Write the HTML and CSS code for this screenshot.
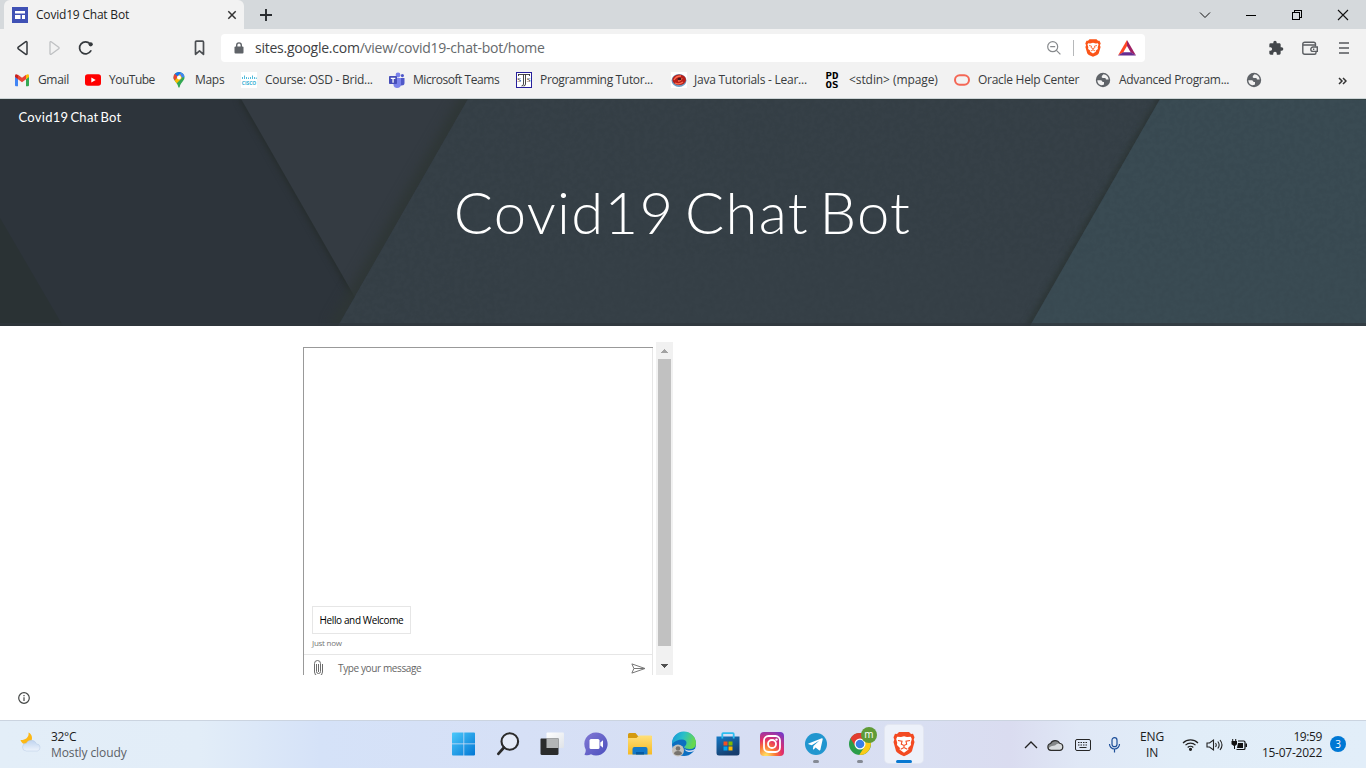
FILE: index.html
```html
<!DOCTYPE html>
<html lang="en">
<head>
<meta charset="utf-8">
<title>Covid19 Chat Bot</title>
<link rel="stylesheet" href="styles.css">
</head>
<body>
<div class="screen">
  <header class="tabstrip">
    <div class="tab">
      <svg class="fav" width="16" height="16" viewBox="0 0 16 16"><path fill="#3f51b5" d="M0 0h16v16H0z"/><path fill="#fff" d="M3 4h10v2.600H3zM3 8h5.500v4H3zM10 8h3v4h-3z"/></svg>
      <span class="tab-title">Covid19 Chat Bot</span>
      <svg width="10" height="10" viewBox="0 0 10 10" stroke="#333" stroke-width="1.500"><path d="M1.300 1.300l7.400 7.400M8.700 1.300L1.300 8.700"/></svg>
    </div>
    <svg class="newtab" width="14" height="14" viewBox="0 0 14 14" stroke="#292c30" stroke-width="1.900"><path d="M7 1v12M1 7h12"/></svg>
    <div class="window-controls">
      <svg width="12" height="12" viewBox="0 0 12 12" fill="none" stroke="#111"><path d="M1 3.500l5 5 5-5"/></svg>
      <svg width="12" height="12" viewBox="0 0 12 12" stroke="#000" shape-rendering="crispEdges"><path d="M1 6.500h10"/></svg>
      <svg width="12" height="12" viewBox="0 0 12 12" fill="none" stroke="#000" shape-rendering="crispEdges"><path d="M1.500 3.500h7v7h-7zM3.500 3V1.500h7v7H9"/></svg>
      <svg width="12" height="12" viewBox="0 0 12 12" stroke="#111" stroke-width="1.100"><path d="M1 1l10 10M11 1L1 11"/></svg>
    </div>
  </header>

  <nav class="toolbar">
    <svg class="back" width="14" height="16" viewBox="0 0 14 16" fill="none" stroke="#363a3e" stroke-width="1.500" stroke-linejoin="round"><path d="M11 2.200v11.600a.8.8 0 0 1-1.200.5L2.300 8.800a1 1 0 0 1 0-1.600L9.800 1.700a.8.8 0 0 1 1.200.5z"/></svg>
    <svg class="forward" width="14" height="16" viewBox="0 0 14 16" fill="none" stroke="#bfc1c3" stroke-width="1.300" stroke-linejoin="round"><path d="M2 2.200v11.600a.8.8 0 0 0 1.200.5l7.500-5.500a1 1 0 0 0 0-1.600L3.200 1.700A.8.8 0 0 0 2 2.200z"/></svg>
    <svg class="reload" width="16" height="16" viewBox="0 0 16 16" fill="none" stroke="#363a3e" stroke-width="1.700"><path d="M12.800 10.800A6 6 0 1 1 12 3.800" stroke-linecap="round"/><circle cx="12.700" cy="4.300" r="2.100" fill="#363a3e" stroke="none"/></svg>
    <svg class="bookmark" width="12" height="16" viewBox="0 0 12 16" fill="none" stroke="#4b4e52" stroke-width="1.700" stroke-linejoin="round"><path d="M1.500 2.200q0-1 1-1h6q1 0 1 1v12.100l-4-3.400-4 3.400z"/></svg>
    <div class="address">
      <svg class="lock" width="10" height="12" viewBox="0 0 10 12"><rect x=".5" y="4.500" width="9" height="7" rx="1" fill="#5f6368"/><path d="M2.700 5V3.200a2.300 2.300 0 0 1 4.600 0V5" fill="none" stroke="#5f6368" stroke-width="1.400"/></svg>
      <span class="url"><span class="host">sites.google.com</span>/view/covid19-chat-bot/home</span>
      <svg class="zoomout" width="14" height="14" viewBox="0 0 14 14" fill="none" stroke="#86898c" stroke-width="1.200"><circle cx="5.700" cy="5.700" r="5"/><path d="M3.200 5.700h5M9.400 9.400l4 4"/></svg>
      <span class="separator"></span>
      <svg class="shields" width="16" height="18" viewBox="0 0 16 18"><path fill="#fb5418" d="M4.500.3h7l1.500 1.500 1.500-.1 1.200 2.800-.8 1.700.7 1.800-1.800 6.200q-.4 1.500-5.800 3.600-5.400-2.100-5.800-3.600L.4 8l.7-1.800-.8-1.700 1.200-2.800 1.500.1z"/><path fill="#fff" d="M3.200 4.200l1.900.2L8 3.700l2.900.7 1.900-.2.700 1.300-.8 2.800.2 1.600-2 1.600.2 1L8 14.400l-3.100-1.900.2-1-2-1.600.2-1.600-.8-2.800z"/><path fill="none" stroke="#fb5418" stroke-width=".8" d="M4 6.500l2.500.6-.4 1.600 1.900.9 1.900-.9-.4-1.600L12 6.500M8 9.600v1.300M5.700 12L8 10.900l2.300 1.100"/></svg>
      <svg class="bat" width="18" height="16" viewBox="0 0 18 16"><path fill="#ff4724" d="M9 0L0 15.500l5.200-3L9 6z"/><path fill="#9e1f63" d="M9 0l9 15.500-5.200-3L9 6z"/><path fill="#662d91" d="M0 15.500h18l-5.200-3.200H5.200z"/></svg>
    </div>
    <svg class="extensions" width="16" height="16" viewBox="0 0 24 24" fill="#43474b"><path d="M20.500 11H19V7c0-1.100-.9-2-2-2h-4V3.500a2.500 2.500 0 0 0-5 0V5H4a2 2 0 0 0-2 2v3.800h1.500a2.700 2.700 0 0 1 0 5.400H2V20c0 1.100.9 2 2 2h3.800v-1.500a2.700 2.700 0 0 1 5.400 0V22H17a2 2 0 0 0 2-2v-4h1.500a2.500 2.500 0 0 0 0-5z"/></svg>
    <svg class="wallet" width="16" height="14" viewBox="0 0 16 14" fill="none" stroke="#5b5e62" stroke-width="1.400"><path d="M13.500 5.500V3q0-1.800-1.800-1.800H2.800Q.8 1.200.8 3v8.200q0 2 2 2h9.700q1.500 0 1.500-1.500v-1.200M1 4h12.500"/><path d="M15.300 6H11a2.200 2.200 0 0 0 0 4.400h4.300z"/><path d="M11 8.200h1.300"/></svg>
    <svg class="menu" width="10" height="14" viewBox="0 0 10 14" stroke="#55585c" stroke-width="1.600"><path d="M0 2h10M0 7h10M0 12h10"/></svg>
  </nav>

  <nav class="bookmarks">
    <div class="bm b1"><svg width="16" height="16" viewBox="0 0 16 16"><path fill="#4285f4" d="M1 4.500v8.700q0 1 1 1h2V7z"/><path fill="#34a853" d="M12 7v7.200h2q1 0 1-1V4.500z"/><path fill="#ea4335" d="M4 7.300V2.800l4 3 4-3v4.500l-4 3z"/><path fill="#c5221f" d="M4 3v4.300L1 5V3.600Q1.400 1 4 3z"/><path fill="#fbbc04" d="M12 3v4.300L15 5V3.600Q14.600 1 12 3z"/></svg><span>Gmail</span></div>
    <div class="bm b2"><svg width="16" height="16" viewBox="0 0 16 16"><rect y="2.200" width="16" height="11.600" rx="2.800" fill="#f00"/><path fill="#fff" d="M6.300 5.500v5L10.700 8z"/></svg><span>YouTube</span></div>
    <div class="bm b3"><svg width="16" height="16" viewBox="0 0 16 16"><clipPath id="pin"><path d="M8 0a5.500 5.500 0 0 0-5.500 5.500c0 3.500 4.200 5 4.800 9.600q.7 1.300 1.400 0c.6-4.600 4.800-6.100 4.800-9.600A5.500 5.500 0 0 0 8 0z"/></clipPath><g clip-path="url(#pin)"><path fill="#34a853" d="M0 0h16v16H0z"/><path fill="#4285f4" d="M7 0h7v5L9 6z"/><path fill="#1a73e8" d="M3 0h7L7 5 3 2z"/><path fill="#ea4335" d="M0 1l4 1 3 3-5 5z"/><path fill="#fbbc04" d="M3 9.500L9 2l2 4-6 6z"/></g><circle cx="8" cy="5.500" r="2" fill="#fff"/></svg><span>Maps</span></div>
    <div class="bm b4"><svg width="16" height="16" viewBox="0 0 16 16"><path fill="#fff" d="M0 0h16v16H0z"/><path stroke="#52bbdb" d="M1.500 5v2M3.500 3.500v3.500M5.500 5v2M7.500 5.500V7M9.500 5v2M11.500 3.500v3.500M13.500 5v2M15.300 5.500V7"/><text x=".8" y="12.500" textLength="14.400" lengthAdjust="spacingAndGlyphs" class="cisco">CISCO</text></svg><span>Course: OSD - Brid...</span></div>
    <div class="bm b5"><svg width="16" height="16" viewBox="0 0 16 16"><circle cx="9" cy="3" r="2.400" fill="#7b83eb"/><circle cx="13.400" cy="3.600" r="1.600" fill="#5059c9"/><path fill="#5059c9" d="M11 6h4.500v5q0 2.500-3 2.500H11z"/><path fill="#7b83eb" d="M5 6h7v6q0 4-4 4-3 0-3.500-3z"/><rect y="4" width="8" height="8" rx=".8" fill="#464eb8"/><path fill="#fff" d="M1.800 5.700h4.500V7H4.700v3.800H3.400V7H1.800z"/></svg><span>Microsoft Teams</span></div>
    <div class="bm b6"><svg width="16" height="16" viewBox="0 0 16 16"><rect x=".5" y=".5" width="15" height="15" fill="#fff" stroke="#27209c"/><path fill="none" stroke="#333" stroke-width=".9" d="M2 2.500h12M2.500 2v2M13.500 2v2M7.500 2.500v9.500q0 2-2 2M9.500 2.500V12q0 2-2 2"/><text x="1.300" y="10" class="tutor">S</text><text x="10.700" y="10" class="tutor">S</text></svg><span>Programming Tutor...</span></div>
    <div class="bm b7"><svg width="16" height="16" viewBox="0 0 16 16"><path fill="#fff" d="M0 0h16v16H0z"/><ellipse cx="8" cy="8.500" rx="7.500" ry="6.500" fill="#6d9ac0"/><ellipse cx="8.200" cy="7.700" rx="6.800" ry="5.200" fill="#b71f1a"/><path fill="none" stroke="#ff6e50" stroke-width="1.300" d="M3 8q2-4 7-4M7 9q3 0 4-3M4 11q4 2 8-1"/><ellipse cx="8.500" cy="7" rx="2" ry="1.300" fill="#481920"/></svg><span>Java Tutorials - Lear...</span></div>
    <div class="bm b8"><svg width="16" height="24" viewBox="0 0 16 24"><text x=".5" y="11" textLength="13" lengthAdjust="spacingAndGlyphs" class="pdos">PD</text><text x=".5" y="19.500" textLength="13" lengthAdjust="spacingAndGlyphs" class="pdos">OS</text></svg><span>&lt;stdin&gt; (mpage)</span></div>
    <div class="bm b9"><svg width="16" height="16" viewBox="0 0 16 16"><rect x="1" y="3.300" width="14" height="9.400" rx="4.700" fill="none" stroke="#f46755" stroke-width="2"/></svg><span>Oracle Help Center</span></div>
    <div class="bm b10"><svg width="16" height="16" viewBox="0 0 16 16"><circle cx="8" cy="8" r="7.200" fill="#5f6368"/><path fill="#f2f2f2" d="M2.300 8.200h3.400q1.700.1 1.800 1.900H9v2.300q-3 1.800-5.300-.3Q2.300 10.500 2.300 8.200zM8.500 2.300q4.300.5 5.200 5.200h-2.500q-.7 0-.7-1.400H7.800q-1.500-.2-1-2z"/></svg><span>Advanced Program...</span></div>
    <div class="bm b11"><svg width="16" height="16" viewBox="0 0 16 16"><circle cx="8" cy="8" r="7.200" fill="#5f6368"/><path fill="#f2f2f2" d="M2.300 8.200h3.400q1.700.1 1.800 1.900H9v2.300q-3 1.800-5.300-.3Q2.300 10.500 2.300 8.200zM8.500 2.300q4.300.5 5.200 5.200h-2.500q-.7 0-.7-1.400H7.800q-1.500-.2-1-2z"/></svg></div>
    <svg class="more" width="9" height="8" viewBox="0 0 9 8" fill="none" stroke="#333" stroke-width="1.500"><path d="M1 1l3 3-3 3M5 1l3 3-3 3"/></svg>
  </nav>

  <main class="page">
    <section class="hero">
      <svg class="hero-art" width="1366" height="227" viewBox="0 0 1366 227">
        <defs>
          <filter id="soft" filterUnits="userSpaceOnUse" x="250" y="-60" width="300" height="350" color-interpolation-filters="sRGB"><feGaussianBlur stdDeviation="6"/></filter>
          <filter id="edge" filterUnits="userSpaceOnUse" x="0" y="-60" width="1366" height="350" color-interpolation-filters="sRGB"><feGaussianBlur stdDeviation="3"/></filter>
          <filter id="grain" x="0" y="0" width="100%" height="100%" color-interpolation-filters="sRGB"><feTurbulence type="fractalNoise" baseFrequency=".2" numOctaves="3" seed="4"/><feColorMatrix values="0 0 0 0 .1  0 0 0 0 .12  0 0 0 0 .14  1 0 0 0 -.4"/></filter>
          <clipPath id="left"><path d="M0 0h241l115 200-18 27H0z"/></clipPath>
          <clipPath id="mid"><path d="M0 0h468L338 227H0z"/></clipPath>
          <clipPath id="center"><path d="M468 0h692l-130 227H338z"/></clipPath>
          <clipPath id="texture"><path d="M468 0h898v227H338z"/></clipPath>
        </defs>
        <path fill="#343b42" d="M0 0h1366v227H0z"/>
        <path fill="#2d343b" d="M0 0h241l130 227H0z"/>
        <g clip-path="url(#left)"><path d="M242-2l130 227" stroke="#252c2b" stroke-width="7" filter="url(#edge)"/></g>
        <path fill="#2a3234" d="M0 119l63 108H0z"/>
        <g clip-path="url(#mid)"><path d="M470-4L336 230" stroke="#2e3635" stroke-width="15" filter="url(#soft)"/></g>
        <path fill="#364047" d="M468 0h692l-130 227H338z"/>
        <g clip-path="url(#center)"><path d="M1163-4L1028 230" stroke="#2b3433" stroke-width="6" filter="url(#edge)"/></g>
        <path fill="#3a4b53" d="M1160 0h206v227h-336z"/>
        <g clip-path="url(#texture)"><path filter="url(#grain)" opacity=".12" d="M338 0h1028v227H338z"/></g>
        <path fill="#303b38" opacity=".45" d="M0 0h1366v1H0z"/>
        <path fill="#2f353c" opacity=".65" d="M0 224h1366v3H0z"/>
      </svg>
      <div class="site-name">Covid19 Chat Bot</div>
      <h1 class="hero-title">Covid19 Chat Bot</h1>
    </section>
    <section class="embed">
      <div class="chat">
        <div class="messages">
          <div class="bubble"><span>Hello and Welcome</span></div>
          <div class="stamp"><span>Just now</span></div>
        </div>
        <div class="composer">
          <svg class="clip" width="9" height="16" viewBox="0 0 9 16" fill="none" stroke="#6c6c6c"><path d="M2.500 4v7.500a2 2 0 0 0 4 0v-8a3 3 0 0 0-6 0V12a4 4 0 0 0 8 0V4M4.500 4v8" /></svg>
          <span class="placeholder">Type your message</span>
          <svg class="send" width="15" height="11" viewBox="0 0 15 11" fill="none" stroke="#767676"><path d="M.9.900L14 5.500.9 10.100l2-4.600zM3 5.500h11"/></svg>
        </div>
      </div>
      <div class="scrollbar">
        <svg width="17" height="17" viewBox="0 0 17 17" shape-rendering="crispEdges"><path fill="#a3a3a3" d="M8 7h1v1h1v1h1v1h1v1H5v-1h1V9h1V8h1z"/></svg>
        <div class="thumb"></div>
        <svg width="17" height="17" viewBox="0 0 17 17" shape-rendering="crispEdges"><path fill="#505050" d="M5 6h7v1h-1v1h-1v1H9v1H8V9H7V8H6V7H5z"/></svg>
      </div>
    </section>
    <svg class="info" width="12" height="12" viewBox="0 0 12 12"><circle cx="6" cy="6" r="5.300" fill="none" stroke="#444746" stroke-width="1.200"/><path fill="#444746" d="M5.400 5.300h1.200V9H5.400zM5.400 3h1.200v1.200H5.400z"/></svg>
  </main>

  <footer class="taskbar">
    <div class="weather">
      <svg width="22" height="20" viewBox="0 0 22 20"><defs><linearGradient id="cl" x2="0" y2="1"><stop stop-color="#bfd3ef"/><stop offset="1" stop-color="#eef4fc"/></linearGradient></defs><path fill="#fcb816" d="M8.500.5c4 1.500 5 8 1 10.800C6 13.500 1.500 11.800.5 8 4 8.500 9.500 6 8.500.5z"/><path fill="url(#cl)" stroke="#b4c9e4" stroke-width=".5" d="M6.500 19a3.900 3.900 0 0 1-.2-7.800 5.600 5.600 0 0 1 10.200.7 3.600 3.600 0 0 1 .8 7.100z"/></svg>
      <div class="weather-text"><span class="temp">32°C</span><span class="cond">Mostly cloudy</span></div>
    </div>
    <div class="apps">
      <div class="app"><svg width="24" height="24" viewBox="0 0 24 24"><defs><linearGradient id="win" x2="1" y2="1"><stop stop-color="#4cc9fb"/><stop offset="1" stop-color="#0277d4"/></linearGradient></defs><path fill="url(#win)" d="M1 .5h10.500v11H0V1.500q0-1 1-1zM12.200.5H22q1 0 1 1v10H12.200zM0 12.200h11.500v11.300H1q-1 0-1-1zM12.200 12.200H23v10.300q0 1-1 1h-9.800z"/></svg></div>
      <div class="app"><svg width="24" height="24" viewBox="0 0 24 24" fill="none" stroke="#2b2b2b"><circle cx="13.800" cy="9.500" r="8.300" stroke-width="2.100" fill="#e5ebf8"/><path d="M8 15.500l-5.700 6.300" stroke-width="2.700" stroke-linecap="round"/></svg></div>
      <div class="app"><svg width="24" height="24" viewBox="0 0 24 24"><defs><linearGradient id="desk" x2="1" y2="1"><stop stop-color="#fff"/><stop offset="1" stop-color="#dfe3e8"/></linearGradient></defs><rect x="6.500" y=".5" width="17.500" height="15.500" rx="1" fill="url(#desk)"/><path fill="#2b2c2c" d="M1 6.500h17.500v15q0 1.500-1.500 1.500H2q-1.500 0-1.500-1.500V7z"/><path fill="#b3b5b6" d="M6.500 6.500h12V16h-12z"/></svg></div>
      <div class="app"><svg width="24" height="24" viewBox="0 0 24 24"><defs><linearGradient id="chatg" x2="1" y2="1"><stop stop-color="#8279d4"/><stop offset="1" stop-color="#4b4fbd"/></linearGradient></defs><path fill="url(#chatg)" d="M12 .5a11.500 11.500 0 1 1-5 21.800Q4 24 1 23q-.7-.3-.3-1 1.300-2 1-4.500A11.500 11.500 0 0 1 12 .5z"/><rect x="5.500" y="7" width="10" height="10" rx="1.500" fill="#fff"/><path fill="#fff" d="M16.300 10.500L19 8.300v7.500l-2.700-2.300z"/></svg></div>
      <div class="app"><svg width="24" height="24" viewBox="0 0 24 24"><defs><linearGradient id="folder" x2="0" y2="1"><stop stop-color="#ffe07a"/><stop offset="1" stop-color="#f6b923"/></linearGradient></defs><path fill="#d49a10" d="M0 2.500Q0 1 1.500 1h6L10 4H24v5H0z"/><path fill="url(#folder)" d="M0 6h8.500l2.500-2.500h12q1 0 1 1v18H0z"/><path fill="#1479c9" d="M4.500 22.500V17q0-2 2-2h11q2 0 2 2v5.500z"/><path fill="#075aa1" d="M8 20h8v2.500H8z"/></svg></div>
      <div class="app"><svg width="26" height="26" viewBox="0 0 26 26"><defs><linearGradient id="edg" y1="0" x2="1" y2=".3"><stop stop-color="#1593dc"/><stop offset=".5" stop-color="#29bfc8"/><stop offset="1" stop-color="#67d84e"/></linearGradient></defs><circle cx="13" cy="13" r="12" fill="#0c6fc1"/><path fill="url(#edg)" d="M1 13A12 12 0 0 1 25 12q0 6-6.500 6-5 0-5-2.500 2-1.200 2-3.500 0-3.500-4.500-3.500Q5 8.500 1 13z"/><path fill="#d9dff4" d="M13.300 15.200q-1.500 3.500 4.200 4.300 4.500.5 7-2l-.8 1.700q-3.500 2.500-7 1.600-4-1.200-3.400-5.600z"/><circle cx="7" cy="19.500" r="6" fill="#c5c2bd"/><circle cx="7" cy="17.500" r="2.300" fill="#77736e"/><path fill="#77736e" d="M3 23q0-3 4-3t4 3q-4 2.500-8 0z"/></svg></div>
      <div class="app"><svg width="24" height="24" viewBox="0 0 24 24"><defs><linearGradient id="store" x2=".5" y2="1"><stop stop-color="#1479c6"/><stop offset="1" stop-color="#173d6c"/></linearGradient></defs><path fill="url(#store)" d="M.5 4.500h23V21q0 2.500-2.500 2.500H3Q.5 23.500.5 21z"/><path fill="none" stroke="#2dbdf0" stroke-width="1.800" d="M6.300 6.500V2q0-.8.800-.8h9.800q.8 0 .8.800v4.500"/><path fill="#f25022" d="M7.500 9.500h4v4h-4z"/><path fill="#7fba00" d="M12.500 9.500h4v4h-4z"/><path fill="#00a4ef" d="M7.500 14.500h4v4h-4z"/><path fill="#ffb900" d="M12.500 14.500h4v4h-4z"/></svg></div>
      <div class="app"><svg width="24" height="24" viewBox="0 0 24 24"><defs><radialGradient id="insta" cx=".25" cy="1" r="1.150"><stop offset=".05" stop-color="#ffdb60"/><stop offset=".35" stop-color="#fa7637"/><stop offset=".6" stop-color="#e32e68"/><stop offset="1" stop-color="#7739c5"/></radialGradient></defs><rect width="24" height="24" rx="4" fill="url(#insta)"/><g fill="none" stroke="#fff" stroke-width="1.800"><rect x="4" y="4" width="16" height="16" rx="4.500"/><circle cx="12" cy="12" r="4"/></g><circle cx="16.500" cy="7.600" r="1.200" fill="#fff"/></svg></div>
      <div class="app running"><svg width="24" height="24" viewBox="0 0 24 24"><circle cx="12" cy="12" r="11" fill="#2196cf"/><path fill="#fff" d="M4.500 11.600l13.300-5.300q1-.2.900.9l-2.300 10.500q-.4 1.100-1.400.5l-3.400-2.600-1.900 1.800q-.7.300-.8-.4L9.400 14l6-5.500-7.600 4.700-3.200-.9q-.8-.4-.1-.7z"/></svg></div>
      <div class="app running"><svg width="24" height="24" viewBox="0 0 24 24"><circle cx="12" cy="12" r="11" fill="#2a9d49"/><path fill="#e23c30" d="M2.500 6.500A11 11 0 0 1 21.700 7H12L7.500 14.500z"/><path fill="#fbca18" d="M21.600 7A11 11 0 0 1 11.200 23l5.500-8.500L12 7z"/><circle cx="12" cy="12" r="5.500" fill="#fff"/><circle cx="12" cy="12" r="4.300" fill="#397fe8"/></svg><span class="profile">m</span></div>
      <div class="app active running"><svg width="22" height="26" viewBox="0 0 22 26"><path fill="#f34a22" d="M6 1h10l2 2 2-.2 1.500 3.500-.8 2.500.8 2.200-2.500 9Q18.500 22 11 25.300 3.500 22 3 20L.5 11l.8-2.200-.8-2.500L2 2.800 4 3z"/><path fill="#fff" d="M4.200 5.800L8 6l3-.8 3 .8 3.800-.2 1 2.300-1 3.600.2 2.400-3 2.800.5 1.500-4.500 3.300-4.500-3.300.5-1.500-3-2.800.2-2.400-1-3.600z"/><path fill="none" stroke="#f34a22" stroke-width="1.100" d="M5 9.500l4 .8-.7 3L11 14.500l2.700-1.200-.7-3 4-.8M11 14.500v2M7.700 18.200l3.300-1.700 3.300 1.700"/></svg></div>
    </div>
    <div class="tray">
      <svg class="t1" width="14" height="10" viewBox="0 0 14 10" fill="none" stroke="#222" stroke-width="1.300"><path d="M1 8l6-6 6 6"/></svg>
      <svg class="t2" width="17" height="12" viewBox="0 0 17 12"><path fill="#d9dcde" d="M4 11.500a3.500 3.500 0 0 1-.4-7 5 5 0 0 1 9-.2 3.600 3.600 0 0 1 .4 7.200z"/><path fill="#858889" d="M1 9.500q-.5-3 2.600-5Q5.500.8 9 1.800q2.500.5 3.600 2.500Q9.500 4.500 8 6.500 4 6.300 1 9.500z"/><path fill="none" stroke="#2c2c2c" stroke-width="1.100" d="M4 11.400a3.500 3.500 0 0 1-.4-6.900 5 5 0 0 1 9-.2 3.600 3.600 0 0 1 .4 7.100z"/></svg>
      <svg class="t3" width="16" height="12" viewBox="0 0 16 12" fill="none" stroke="#262626"><rect x=".5" y=".5" width="15" height="11" rx="1.500"/><path stroke-dasharray="1.500 1" d="M3 3.500h10M3 6h10"/><path d="M4.500 8.500h7"/></svg>
      <svg class="t4" width="13" height="16" viewBox="0 0 13 16" fill="none" stroke="#1c4e98" stroke-width="1.200"><rect x="4" y=".7" width="5" height="9" rx="2.500"/><path d="M1.500 7a5 5 0 0 0 10 0M6.500 12v3.500"/></svg>
      <div class="lang"><span>ENG</span><span>IN</span></div>
      <svg class="t5" width="17" height="13" viewBox="0 0 17 13" fill="none" stroke="#222" stroke-width="1.200"><path d="M1 5a10.500 10.500 0 0 1 15 0M3.500 7.200a7 7 0 0 1 10 0M5.700 9.500a4 4 0 0 1 5.600 0"/><circle cx="8.500" cy="11.300" r="1" fill="#222"/></svg>
      <svg class="t6" width="18" height="14" viewBox="0 0 18 14" fill="none" stroke="#222" stroke-width="1.100"><path d="M1 5v4h2.500L7.500 12V2L3.500 5zM9.500 5q1.500 2 0 4M11.800 3.500q2.700 3.500 0 7M14 2q4 5 0 10"/></svg>
      <svg class="t7" width="17" height="14" viewBox="0 0 17 14"><path fill="#111" d="M1.200 1h1v2h2V1h1v2H6v3.300L4 8v3H3V8L.5 6.300V3h.7z"/><path fill="none" stroke="#111" stroke-width="1.200" d="M7 3h5.800q1.200 0 1.200 1.200v6q0 1.300-1.200 1.300H5.500"/><path fill="#111" d="M7 5h5v5H6zM14.500 5.500H16v3.500h-1.500z"/></svg>
      <div class="clock"><span class="time">19:59</span><span class="date">15-07-2022</span></div>
      <div class="badge">3</div>
    </div>
  </footer>
</div>
</body>
</html>
```
FILE: styles.css
```css
* { box-sizing: border-box; }
body { margin: 0; overflow: hidden; font-family: "Open Sans", "Noto Sans", sans-serif; }
svg { display: block; flex: none; }
span { white-space: nowrap; }
.screen { width: 1366px; height: 768px; display: flex; flex-direction: column; background: #fff; }

.tabstrip { height: 29px; flex: none; display: flex; align-items: center; background: #d5d9dc; padding-left: 4px; }
.tab { width: 240px; height: 29px; display: flex; align-items: center; padding: 0 7px 0 8px; background: #f2f2f2; border-radius: 6px 6px 0 0; }
.tab-title { flex: 1; margin-left: 8px; font-size: 12px; letter-spacing: -0.2px; color: #222; }
.newtab { margin: 1px 0 0 15px; }
.window-controls { margin-left: auto; margin-right: 17px; display: flex; gap: 34px; }

.toolbar { height: 37px; flex: none; display: flex; align-items: center; background: #f2f2f2; }
.back { margin-left: 16px; }
.forward { margin-left: 18px; }
.reload { margin-left: 16px; }
.bookmark { margin-left: 99.500px; }
.address { width: 924px; height: 28px; margin-left: 15.500px; display: flex; align-items: center; background: #fff; border-radius: 4px; padding-left: 13px; }
.url { margin-left: 11px; width: 783px; font-size: 14px; letter-spacing: -0.25px; color: #65696c; }
.host { color: #3e4144; }
.zoomout { margin-left: 9px; }
.separator { width: 1px; height: 16px; margin-left: 12px; background: #b6b8ba; }
.shields { margin-left: 11px; }
.bat { margin-left: 17px; }
.extensions { margin-left: 123px; }
.wallet { margin-left: 18px; }
.menu { margin-left: 21px; }

.bookmarks { height: 33px; flex: none; display: flex; align-items: center; background: #f2f2f2; border-bottom: 1px solid #ccd4d6; padding: 0 0 4px 14px; }
.bm { display: flex; align-items: center; gap: 8px; flex: none; height: 20px; font-size: 12px; letter-spacing: -0.28px; color: #393c40; }
.bm span { margin-top: -1px; }
.b1 { width: 71px; letter-spacing: -0.35px; }
.b2 { width: 86px; letter-spacing: -0.5px; }
.b3 { width: 70px; letter-spacing: -0.3px; }
.b4 { width: 148px; letter-spacing: -0.25px; }
.b5 { width: 127px; letter-spacing: -0.45px; }
.b6 { width: 155px; letter-spacing: -0.34px; }
.b7 { width: 154px; gap: 7px; letter-spacing: -0.24px; }
.b8 { width: 129px; letter-spacing: -0.08px; }
.b9 { width: 141px; }
.b10 { width: 151px; letter-spacing: -0.3px; }
.more { margin: 1px 0 0 76px; }
.cisco { font: 700 5px "Open Sans", sans-serif; letter-spacing: 0; fill: #36aed2; }
.tutor { font: 7px "Liberation Serif", serif; letter-spacing: 0; fill: #222; }
.pdos { font: 700 9.500px "DejaVu Sans Mono", monospace; letter-spacing: 0; fill: #000; }

.page { height: 621px; flex: none; display: flex; flex-direction: column; }
.hero { position: relative; height: 227px; flex: none; overflow: hidden; background: #333a40; color: #fff; font-family: Lato, sans-serif; }
.hero-art { position: absolute; left: 0; top: 0; }
.site-name { position: relative; height: 18px; padding: 9px 0 0 18.500px; font-size: 13px; line-height: 19px; letter-spacing: 0.28px; word-spacing: -1.6px; }
.hero-title { position: relative; margin: 58px 0 0; padding-right: 1px; text-align: center; font-size: 58px; font-weight: 300; line-height: 74px; letter-spacing: 1.3px; word-spacing: -6.5px; }
.embed { display: flex; margin: 16px 0 0 303px; height: 333px; }
.chat { width: 350px; height: 328px; margin: 5px 3px 0 0; border-left: 1px solid #999; border-top: 1px solid #999; overflow: hidden; display: flex; flex-direction: column; background: #fff; }
.messages { height: 306px; flex: none; display: flex; flex-direction: column; justify-content: flex-end; align-items: flex-start; padding: 0 0 5px 8px; border-right: 1px solid #e6e6e6; }
.bubble { width: 99px; height: 28px; display: flex; align-items: center; border: 1px solid #e6e6e6; padding: 0 0 1px 6.500px; font-size: 10px; letter-spacing: -0.37px; color: #000; }
.stamp { height: 11px; margin-top: 4px; font-size: 8px; line-height: 10px; color: #767676; letter-spacing: -0.25px; }
.composer { height: 27px; flex: none; display: flex; align-items: center; border-top: 1px solid #e6e6e6; border-right: 1px solid #e6e6e6; padding-left: 10px; }
.placeholder { width: 277px; margin-left: 15px; font-size: 10px; letter-spacing: -0.38px; color: #666; }
.send { margin-left: 16px; }
.scrollbar { width: 17px; height: 333px; background: #f1f1f1; display: flex; flex-direction: column; align-items: center; justify-content: space-between; }
.thumb { width: 13px; height: 287px; margin-bottom: 12px; background: #c1c1c1; }
.info { margin: 17px 0 0 18px; }

.taskbar { height: 48px; flex: none; display: flex; border-top: 1px solid #cbd4e0; background: linear-gradient(90deg, #e3eef8 0, #e2edf8 200px, #d5e2f8 320px, #d6e0f6 520px, #d7def3 760px, #d9dff2 920px, #dadcf0 1010px, #e0e8f6 1080px, #e1edf8 1180px, #e2eef9); }
.weather { width: 433px; display: flex; padding: 11px 0 0 20px; }
.weather-text { margin-left: 9px; margin-top: -3px; display: flex; flex-direction: column; font-size: 12px; line-height: 16px; }
.temp { color: #1b1b1b; letter-spacing: -0.3px; }
.cond { color: #5b6066; letter-spacing: -0.1px; }
.apps { display: flex; gap: 6px; padding: 4px 0 0 12px; }
.app { position: relative; width: 38px; height: 38px; display: flex; align-items: center; justify-content: center; border-radius: 4px; }
.active { background: #edf1fa; box-shadow: 0 0 0 1px #e2e6f1; }
.running::after { content: ""; position: absolute; left: 16px; bottom: 0; width: 6px; height: 3px; border-radius: 2px; background: #858a94; }
.active::after { left: 11px; width: 16px; background: #0878d1; }
.profile { position: absolute; left: 20px; top: 2px; width: 16px; height: 16px; border-radius: 8px; background: #5f9b36; color: #fff; font-size: 10px; line-height: 14px; text-align: center; }
.tray { margin-left: auto; margin-right: 20px; display: flex; align-items: center; color: #1b1b1b; font-size: 12px; line-height: 16px; }
.t2 { margin-left: 9px; }
.t3 { margin-left: 11px; }
.t4 { margin-left: 17px; }
.lang { width: 26px; margin-left: 18px; display: flex; flex-direction: column; align-items: center; letter-spacing: -0.2px; }
.t5 { margin-left: 17px; }
.t6 { margin-left: 7px; }
.t7 { margin-left: 7px; }
.clock { width: 74px; display: flex; flex-direction: column; align-items: flex-end; }
.time { letter-spacing: -0.4px; }
.date { letter-spacing: -0.25px; }
.badge { width: 16px; height: 16px; margin-left: 8px; margin-top: -1px; border-radius: 8px; background: #0078d4; color: #fff; font-size: 10px; line-height: 16px; text-align: center; }
```
